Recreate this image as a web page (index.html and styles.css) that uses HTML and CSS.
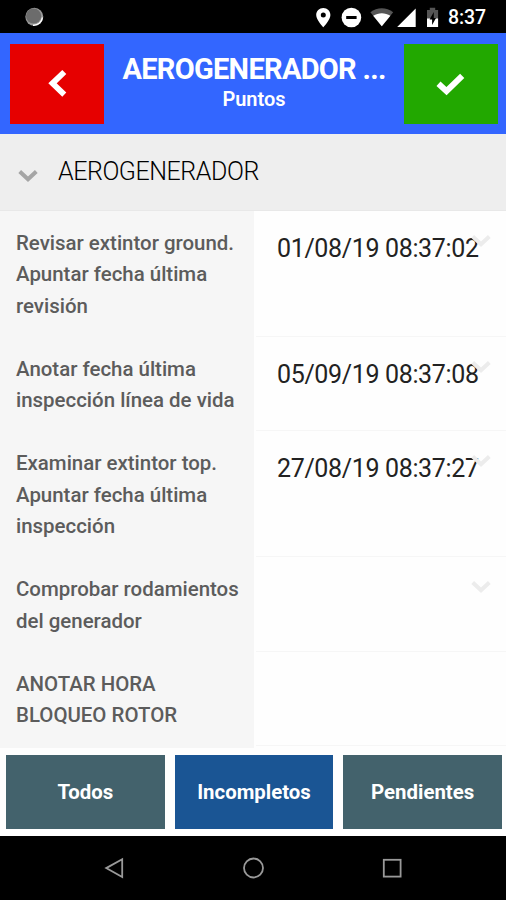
FILE: index.html
```html
<!DOCTYPE html>
<html lang="es">
<head>
    <meta charset="UTF-8">
    <meta name="viewport" content="width=device-width, initial-scale=1.0">
    <title>Puntos</title>
    <link rel="stylesheet" href="styles.css">
</head>
<body>
    <div class="statusbar">
        <svg class="status-sync" width="22" height="22" viewBox="0 0 22 22">
            <circle cx="11.300" cy="10.800" r="9" fill="#999"/>
            <circle cx="10.600" cy="10" r="7.600" fill="#6c6c6c"/>
            <path d="M19.400 11.500A8.600 8.600 0 0 1 10 19.200" fill="none" stroke="#fff" stroke-width="1.400"/>
        </svg>
        <svg class="status-icons" width="130" height="24" viewBox="0 0 130 24">
            <path fill="#fff" fill-rule="evenodd" d="M8.3 2c-4 0-7.1 3-7.1 7 0 5 7.1 12.300 7.1 12.300s7.1-7.300 7.1-12.300c0-4-3.100-7-7.100-7zm0 4.600a2.500 2.500 0 1 1 0 5 2.500 2.500 0 0 1 0-5z"/>
            <circle cx="36.4" cy="11.500" r="9.8" fill="#fff"/>
            <rect x="31.2" y="10" width="10.4" height="3" fill="#000"/>
            <path fill="#555" d="M55.400 6.300C62 .9 71.500 .9 78.200 6.300L66.800 20.300z"/>
            <path fill="#fff" d="M58.200 9.700C63.500 6.300 70.100 6.300 75.400 9.700L66.800 20.300z"/>
            <path fill="#fff" d="M100.700 2.500V21H82.200z"/>
            <path fill="#555" d="M112 4h2.800V1.700h5.400V4h2.900v9h-11.100z"/>
            <path fill="#fff" d="M112 12.500h11.100V21H112z"/>
            <path fill="#000" d="M118.800 6l-4.200 7.500h2.500V19l3.900-7h-2.200z"/>
        </svg>
        <span class="clock">8:37</span>
    </div>

    <div class="header">
        <button class="btn-back">
            <svg width="20" height="30" viewBox="0 0 20 30">
                <path d="M17.300 3L5.500 14.300L17.300 25.600" fill="none" stroke="#fff" stroke-width="5.800"/>
            </svg>
        </button>
        <div class="title">
            <h1>AEROGENERADOR ...</h1>
            <h2>Puntos</h2>
        </div>
        <button class="btn-ok">
            <svg width="30" height="24" viewBox="0 0 30 24">
                <path d="M2.500 11.800L10.500 19.100L26.200 3.800" fill="none" stroke="#fff" stroke-width="6"/>
            </svg>
        </button>
    </div>

    <div class="section">
        <svg width="20" height="14" viewBox="0 0 20 14">
            <path d="M1.700 2.500L10 10.300L18.300 2.500" fill="none" stroke="#a5a5a5" stroke-width="4"/>
        </svg>
        <span>AEROGENERADOR</span>
    </div>

    <div class="list">
        <div class="row">
            <div class="label">Revisar extintor ground.<br>Apuntar fecha última<br>revisión</div>
            <div class="value">
                <span>01/08/19 08:37:02</span>
                <svg class="arrow" width="20" height="14" viewBox="0 0 20 14"><path d="M1.700 2.500L10 10.300L18.300 2.500"/></svg>
            </div>
        </div>
        <div class="row">
            <div class="label">Anotar fecha última<br>inspección línea de vida</div>
            <div class="value">
                <span>05/09/19 08:37:08</span>
                <svg class="arrow" width="20" height="14" viewBox="0 0 20 14"><path d="M1.700 2.500L10 10.300L18.300 2.500"/></svg>
            </div>
        </div>
        <div class="row">
            <div class="label">Examinar extintor top.<br>Apuntar fecha última<br>inspección</div>
            <div class="value">
                <span>27/08/19 08:37:27</span>
                <svg class="arrow" width="20" height="14" viewBox="0 0 20 14"><path d="M1.700 2.500L10 10.300L18.300 2.500"/></svg>
            </div>
        </div>
        <div class="row">
            <div class="label">Comprobar rodamientos<br>del generador</div>
            <div class="value">
                <svg class="arrow" width="20" height="14" viewBox="0 0 20 14"><path d="M1.700 2.500L10 10.300L18.300 2.500"/></svg>
            </div>
        </div>
        <div class="row last">
            <div class="label">ANOTAR HORA<br>BLOQUEO ROTOR</div>
            <div class="value"></div>
        </div>
    </div>

    <div class="tabs">
        <button>Todos</button>
        <button class="active">Incompletos</button>
        <button>Pendientes</button>
    </div>

    <div class="navbar">
        <svg width="24" height="24" viewBox="0 0 24 24"><path d="M20.200 3.200V21L4.200 12.100z"/></svg>
        <svg width="24" height="24" viewBox="0 0 24 24"><circle cx="12.500" cy="12" r="9.500"/></svg>
        <svg width="24" height="24" viewBox="0 0 24 24"><rect x="3.800" y="3.800" width="16.800" height="16.800"/></svg>
    </div>
</body>
</html>
```
FILE: styles.css
```css
* {
    box-sizing: border-box;
}
body {
    margin: 0;
    width: 506px;
    height: 900px;
    display: flex;
    flex-direction: column;
    overflow: hidden;
    font-family: Roboto, sans-serif;
    background-color: #fefefe;
}
button {
    border: none;
    padding: 0;
    font-family: inherit;
    color: white;
}
.statusbar {
    flex: none;
    display: flex;
    align-items: center;
    height: 33px;
    padding: 0 20px 0 23px;
    background-color: #000;
    color: white;
}
.status-icons {
    margin-left: auto;
    margin-top: 2px;
}
.clock {
    width: 38px;
    margin-left: 3px;
    margin-top: 2px;
    font-size: 19.5px;
    font-weight: 500;
    letter-spacing: -0.1px;
    white-space: nowrap;
}
.header {
    flex: none;
    display: flex;
    justify-content: space-between;
    height: 101px;
    padding: 11px 8px 0 10px;
    background-color: #3366ff;
    color: white;
}
.header button {
    display: flex;
    justify-content: center;
    align-items: center;
    width: 94px;
    height: 80px;
}
.header .btn-back {
    background-color: #e60000;
}
.header .btn-ok {
    background-color: #22a800;
}
.title {
    text-align: center;
}
.title h1 {
    margin: 8px 0 0;
    font-size: 29px;
    line-height: 34px;
    font-weight: 700;
    letter-spacing: -0.7px;
    white-space: nowrap;
}
.title h2 {
    margin: 1px 0 0;
    font-size: 20px;
    line-height: 24px;
    font-weight: 600;
}
.section {
    flex: none;
    display: flex;
    align-items: center;
    gap: 20px;
    height: 77px;
    padding-left: 18px;
    background-color: #eee;
    border-bottom: 1px solid #e8e8e8;
    font-size: 25px;
    font-weight: 300;
    letter-spacing: -0.45px;
    color: #000;
}
.section svg {
    margin-top: 7px;
}
.section span {
    margin-top: -1px;
}
.list {
    flex: 1;
    min-height: 0;
    overflow: hidden;
}
.row {
    display: flex;
}
.label {
    width: 254px;
    padding: 17px 0 15px 16px;
    background-color: #f6f6f6;
    color: #5c5c5c;
    font-size: 20.45px;
    font-weight: 500;
    line-height: 31.3px;
    white-space: nowrap;
}
.last .label {
    padding-bottom: 16.5px;
}
.value {
    position: relative;
    flex: 1;
    margin-left: 2px;
    padding: 22px 0 0 21px;
    border-bottom: 1px solid #f6f6f6;
    font-size: 25px;
    letter-spacing: -0.35px;
    line-height: 31px;
    color: #222;
    white-space: nowrap;
}
.last .value {
    margin-bottom: 2px;
}
/* the arrow overlaps the end of the date */
.arrow {
    position: absolute;
    top: 23px;
    right: 15px;
    fill: none;
    stroke: #ececec;
    stroke-width: 4;
}
.tabs {
    flex: none;
    display: flex;
    gap: 10px;
    height: 88px;
    padding: 7px 4px 7px 6px;
    background-color: #fefefe;
}
.tabs button {
    flex: 1;
    background-color: #43626c;
    font-size: 20.4px;
    font-weight: 700;
}
.tabs .active {
    background-color: #1a5594;
}
.navbar {
    flex: none;
    display: flex;
    justify-content: center;
    gap: 115px;
    height: 64px;
    padding-top: 20px;
    background-color: #000;
}
.navbar svg {
    fill: none;
    stroke: #999;
    stroke-width: 1.8;
}
```
